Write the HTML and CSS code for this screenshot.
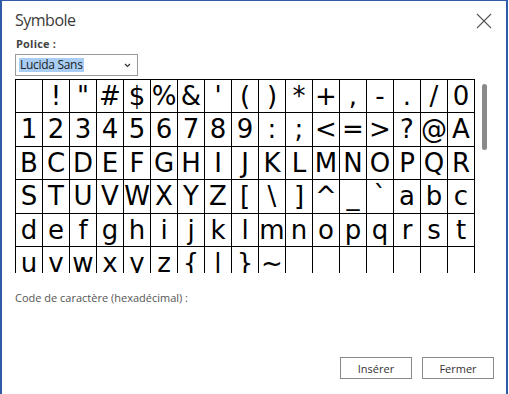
FILE: index.html
```html
<!DOCTYPE html>
<html lang="fr">
<head>
<meta charset="utf-8">
<title>Symbole</title>
<link rel="stylesheet" href="styles.css">
</head>
<body>
<div class="window">
  <div class="header">
    <div class="title">Symbole</div>
    <svg class="close" width="16" height="16" viewBox="0 0 16 16" aria-label="Fermer">
      <path d="M1 1 L15 15 M15 1 L1 15" stroke="#555" stroke-width="1.1" fill="none"/>
    </svg>
  </div>
  <div class="field">
    <div class="label">Police :</div>
    <div class="select">
      <span class="sel-text">Lucida Sans</span>
      <svg class="chev" width="7" height="5" viewBox="0 0 7 5"><path d="M1 1 L3.5 3.5 L6 1" stroke="#333" stroke-width="1.2" fill="none"/></svg>
    </div>
  </div>
  <div class="charzone">
    <div class="viewport">
      <div class="grid">
        <div class="cell"> </div><div class="cell">!</div><div class="cell">"</div><div class="cell">#</div><div class="cell">$</div><div class="cell">%</div><div class="cell">&amp;</div><div class="cell">'</div><div class="cell">(</div><div class="cell">)</div><div class="cell">*</div><div class="cell">+</div><div class="cell">,</div><div class="cell">-</div><div class="cell">.</div><div class="cell">/</div><div class="cell">0</div>
        <div class="cell">1</div><div class="cell">2</div><div class="cell">3</div><div class="cell">4</div><div class="cell">5</div><div class="cell">6</div><div class="cell">7</div><div class="cell">8</div><div class="cell">9</div><div class="cell">:</div><div class="cell">;</div><div class="cell">&lt;</div><div class="cell">=</div><div class="cell">&gt;</div><div class="cell">?</div><div class="cell">@</div><div class="cell">A</div>
        <div class="cell">B</div><div class="cell">C</div><div class="cell">D</div><div class="cell">E</div><div class="cell">F</div><div class="cell">G</div><div class="cell">H</div><div class="cell">I</div><div class="cell">J</div><div class="cell">K</div><div class="cell">L</div><div class="cell">M</div><div class="cell">N</div><div class="cell">O</div><div class="cell">P</div><div class="cell">Q</div><div class="cell">R</div>
        <div class="cell">S</div><div class="cell">T</div><div class="cell">U</div><div class="cell">V</div><div class="cell">W</div><div class="cell">X</div><div class="cell">Y</div><div class="cell">Z</div><div class="cell">[</div><div class="cell">\</div><div class="cell">]</div><div class="cell">^</div><div class="cell">_</div><div class="cell">`</div><div class="cell">a</div><div class="cell">b</div><div class="cell">c</div>
        <div class="cell">d</div><div class="cell">e</div><div class="cell">f</div><div class="cell">g</div><div class="cell">h</div><div class="cell">i</div><div class="cell">j</div><div class="cell">k</div><div class="cell">l</div><div class="cell">m</div><div class="cell">n</div><div class="cell">o</div><div class="cell">p</div><div class="cell">q</div><div class="cell">r</div><div class="cell">s</div><div class="cell">t</div>
        <div class="cell">u</div><div class="cell">v</div><div class="cell">w</div><div class="cell">x</div><div class="cell">y</div><div class="cell">z</div><div class="cell">{</div><div class="cell">|</div><div class="cell">}</div><div class="cell">~</div><div class="cell"></div><div class="cell"></div><div class="cell"></div><div class="cell"></div><div class="cell"></div><div class="cell"></div><div class="cell"></div>
      </div>
    </div>
    <div class="scrollbar"><div class="thumb"></div></div>
  </div>
  <div class="code-label">Code de caractère (hexadécimal) :</div>
  <div class="footer">
    <button class="btn">Insérer</button>
    <button class="btn">Fermer</button>
  </div>
</div>
</body>
</html>
```

FILE: styles.css
```css
html, body {
  margin: 0;
  padding: 0;
  background: #ffffff;
}

.window {
  width: 504px;
  height: 393px;
  overflow: hidden;
  border-left: 2px solid #2f5ca8;
  border-right: 2px solid #2f5ca8;
  border-top: 1px solid #2f5ca8;
  box-sizing: content-box;
  font-family: "Open Sans", "Noto Sans", sans-serif;
  color: #333;
}

.header {
  display: flex;
  justify-content: space-between;
  align-items: flex-start;
  padding: 0 13px 0 13px;
  height: 36px;
}

.title {
  font-size: 16px;
  line-height: 20px;
  margin-top: 9px;
  letter-spacing: -0.5px;
  color: #3a3a3a;
}

.close {
  margin-top: 12px;
  margin-right: 1px;
}

.field {
  padding-left: 13px;
}

.label {
  font-size: 11px;
  line-height: 14px;
  font-weight: bold;
  color: #444;
  letter-spacing: 0.2px;
  padding-left: 1px;
}

.select {
  margin-top: 3px;
  height: 20px;
  border: 1px solid #9a9a9a;
  display: flex;
  align-items: center;
  justify-content: space-between;
  padding: 0 6px 0 3px;
  box-sizing: content-box;
  width: 112px;
}

.sel-text {
  font-size: 12px;
  line-height: 14px;
  background: #a9cdf5;
  color: #222;
  letter-spacing: -0.3px;
  padding: 0 1px;
}

.chev {
  margin-top: 1px;
}

.charzone {
  display: flex;
  align-items: flex-start;
  padding-left: 13px;
  margin-top: 3px;
}

.viewport {
  height: 194px;
  overflow: hidden;
}

.grid {
  display: grid;
  grid-template-columns: repeat(17, 26px);
  grid-template-rows: 32px 33px 32px 33px 32px 33px;
  gap: 1px;
  padding: 1px;
  background: #000;
  width: max-content;
}

.cell {
  background: #fff;
  color: #000;
  font-family: "DejaVu Sans", sans-serif;
  font-size: 26px;
  line-height: 32px;
  text-align: center;
  overflow: hidden;
  white-space: pre;
}

.scrollbar {
  margin-left: 7px;
  padding-top: 5px;
}

.thumb {
  width: 5px;
  height: 66px;
  border-radius: 3px;
  background: #8a8a8a;
}

.code-label {
  margin-top: 18px;
  padding-left: 13px;
  font-size: 11px;
  line-height: 14px;
  color: #555;
}

.footer {
  display: flex;
  justify-content: flex-end;
  gap: 10px;
  padding-right: 12px;
  margin-top: 52px;
}

.btn {
  width: 72px;
  height: 22px;
  border: 1px solid #8a8a8a;
  background: #fff;
  font-family: "Open Sans", "Noto Sans", sans-serif;
  font-size: 11px;
  color: #333;
  padding: 0;
  margin: 0;
}
```
